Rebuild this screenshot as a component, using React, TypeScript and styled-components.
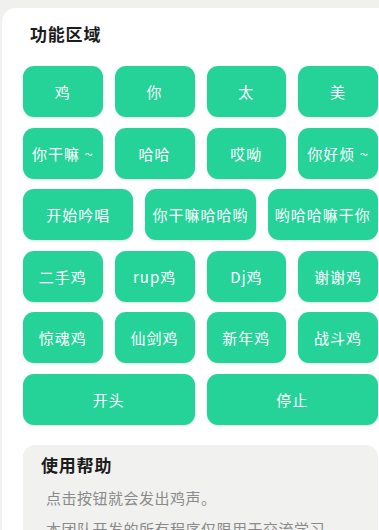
import styled, { createGlobalStyle } from "styled-components";

const GlobalStyle = createGlobalStyle`
  html, body {
    margin: 0;
    padding: 0;
    background: #f0f1ef;
    overflow: hidden;
    font-family: "Noto Sans CJK SC", "Noto Sans", sans-serif;
  }
`;

const Page = styled.div`
  padding: 8px 0 0 2px;
  width: 379px;
  height: 530px;
  box-sizing: border-box;
  overflow: hidden;
`;

const Card = styled.div`
  width: 397px;
  box-sizing: border-box;
  background: #ffffff;
  border-radius: 14px;
  padding: 16px 21px 20px;
`;

const Title = styled.h2`
  margin: 0 0 22px 7px;
  font-size: 17px;
  line-height: 20px;
  font-weight: 700;
  letter-spacing: 0.8px;
  color: #1c1c1c;
`;

const Grid = styled.div`
  display: flex;
  flex-direction: column;
  gap: 10.5px;
`;

const Row = styled.div`
  display: flex;
  gap: 12px;
`;

const SoundButton = styled.button`
  flex: 1;
  min-width: 0;
  height: 51px;
  border: none;
  border-radius: 11px;
  background: #25d399;
  box-shadow: 0 1px 3px rgba(0, 0, 0, 0.12);
  color: #ffffff;
  font-family: "Noto Sans CJK SC", "Noto Sans", sans-serif;
  font-size: 15px;
  letter-spacing: 1px;
  padding: 0;
  white-space: nowrap;
  cursor: pointer;
`;

const Help = styled.div`
  margin-top: 20.5px;
  background: #f1f2f0;
  border-radius: 12px;
  padding: 9px 18px 16px;
`;

const HelpTitle = styled.h3`
  margin: 0;
  font-size: 17px;
  line-height: 22px;
  font-weight: 700;
  letter-spacing: 0.8px;
  color: #1c1c1c;
`;

const HelpText = styled.p<{ $first?: boolean }>`
  margin: ${(p) => (p.$first ? "6px" : "0")} 0 0;
  padding-left: 5px;
  font-size: 15px;
  line-height: 31px;
  letter-spacing: 0.5px;
  color: #8a8a8a;
`;

const rows: string[][] = [
  ["鸡", "你", "太", "美"],
  ["你干嘛 ~", "哈哈", "哎呦", "你好烦 ~"],
  ["开始吟唱", "你干嘛哈哈哟", "哟哈哈嘛干你"],
  ["二手鸡", "rup鸡", "Dj鸡", "谢谢鸡"],
  ["惊魂鸡", "仙剑鸡", "新年鸡", "战斗鸡"],
  ["开头", "停止"],
];

function App() {
  return (
    <Page>
      <GlobalStyle />
      <Card>
        <Title>功能区域</Title>
        <Grid>
          {rows.map((row, i) => (
            <Row key={i}>
              {row.map((label) => (
                <SoundButton key={label}>{label}</SoundButton>
              ))}
            </Row>
          ))}
        </Grid>
        <Help>
          <HelpTitle>使用帮助</HelpTitle>
          <HelpText $first>点击按钮就会发出鸡声。</HelpText>
          <HelpText>本团队开发的所有程序仅限用于交流学习</HelpText>
        </Help>
      </Card>
    </Page>
  );
}

export default App;
